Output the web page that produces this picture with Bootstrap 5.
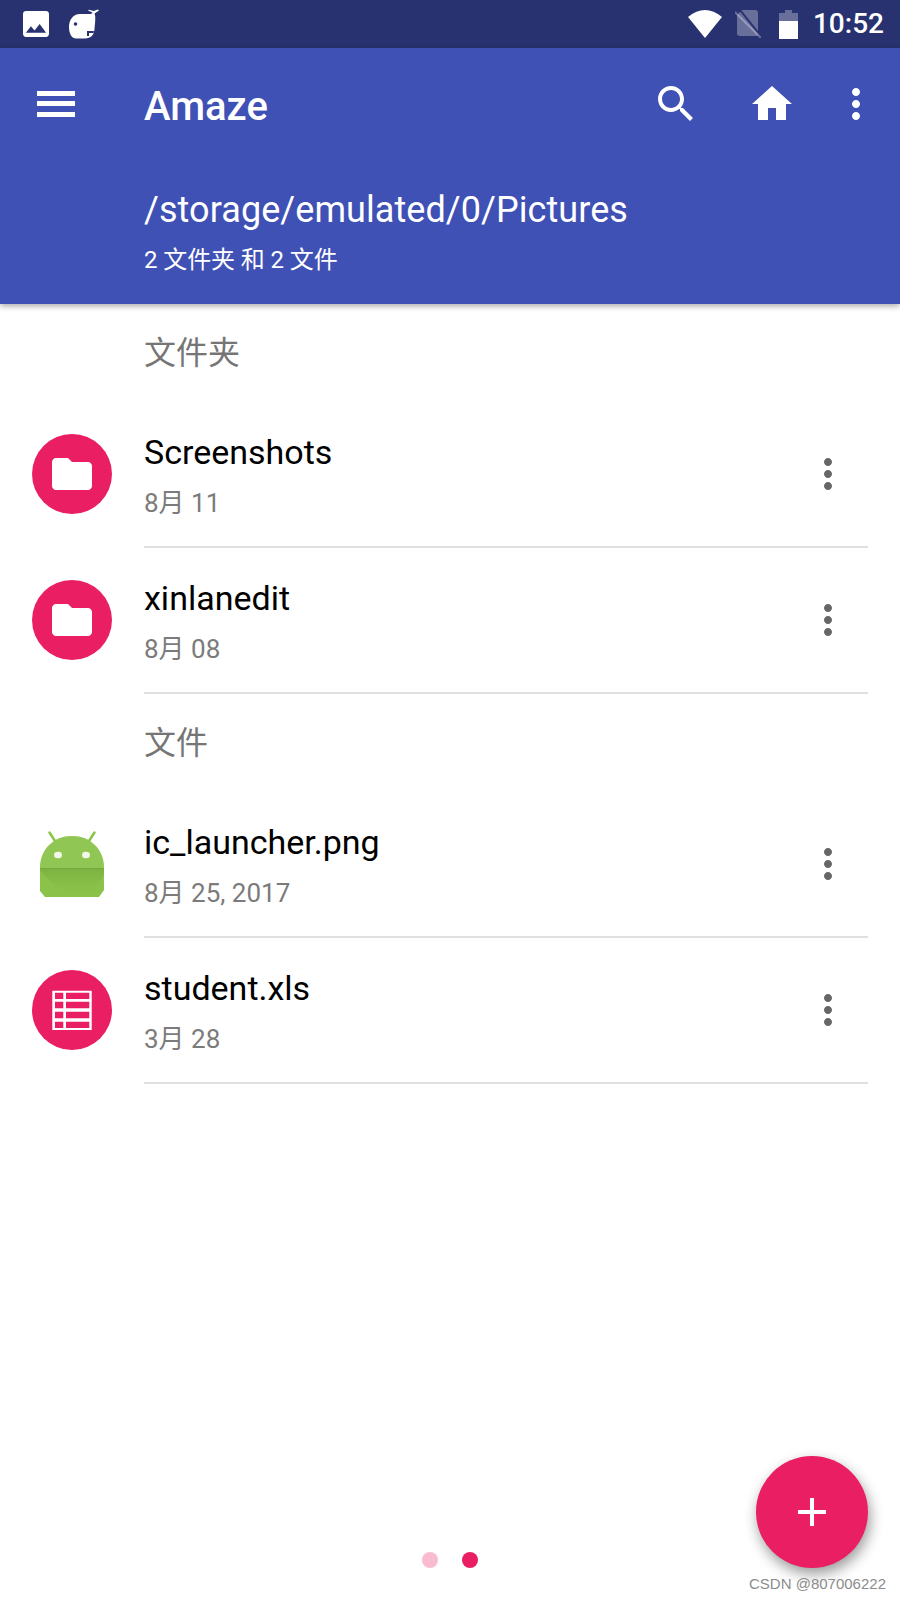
<!DOCTYPE html>
<html lang="zh">
<head>
    <meta charset="UTF-8">
    <meta name="viewport" content="width=device-width, initial-scale=1.0">
    <title>Amaze</title>
    <link href="https://cdn.jsdelivr.net/npm/bootstrap@5.3.0/dist/css/bootstrap.min.css" rel="stylesheet">
    <style>
        html, body { height: 1600px; overflow: hidden; }
        body {
            font-family: Roboto, "Noto Sans CJK SC", sans-serif;
            background: #fff;
            color: #000;
        }
        .phone { position: relative; height: 1600px; }
        .status-bar { height: 48px; background: #283270; padding: 0 16px 0 23px; color: #fff; }
        .status-clock { font-size: 28px; font-weight: 500; line-height: 48px; margin-left: 15px; }
        .app-bar { height: 256px; background: #3f51b5; color: #fff; box-shadow: 0 2px 6px rgba(0,0,0,.35); position: relative; }
        .tool-row { height: 48px; margin-top: 32px; padding: 0 20px 0 32px; }
        .app-title { font-size: 40px; font-weight: 500; line-height: 48px; margin-left: 64px; padding-top: 6px; }
        .path-block { padding-left: 144px; margin-top: 58px; }
        .path-text { font-size: 36px; line-height: 48px; letter-spacing: .07px; }
        .path-sub { font-size: 24px; line-height: 32px; margin-top: 10px; letter-spacing: -.1px; }
        .sect-head { height: 98px; padding: 25px 0 0 144px; font-size: 32px; line-height: 48px; color: #757575; }
        .file-row { height: 146px; padding-left: 32px; }
        .file-icon { width: 80px; height: 80px; flex: none; margin-bottom: 2px; }
        .pink-disc { background: #e91e63; }
        .file-body { height: 146px; margin-left: 32px; margin-right: 32px; border-bottom: 2px solid #e0e0e0; padding-right: 16px; }
        .file-name { font-size: 34px; line-height: 44px; padding-top: 28px; box-sizing: content-box; }
        .file-date { font-size: 26px; line-height: 34px; margin-top: 12px; color: #7b7b7b; }
        .pager { padding-bottom: 32px; gap: 24px; }
        .pager-dot { width: 16px; height: 16px; background: #e91e63; }
        .pager-dot.dim { background: #f8bbd0; }
        .fab-add { position: absolute; left: 756px; top: 1456px; width: 112px; height: 112px; background: #e91e63; box-shadow: 2px 6px 14px rgba(0,0,0,.4); }
        .water-mark { position: absolute; left: 749px; top: 1575px; font: 15px/18px "Liberation Sans", sans-serif; color: #8c8c8c; white-space: nowrap; }
    </style>
</head>
<body>
<div class="phone d-flex flex-column">
    <div class="status-bar d-flex align-items-center flex-none">
        <svg width="26" height="26" viewBox="3 3 18 18"><path fill="#fff" fill-rule="evenodd" d="M21 19V5c0-1.100-.9-2-2-2H5c-1.100 0-2 .9-2 2v14c0 1.100.9 2 2 2h14c1.100 0 2-.9 2-2zM8.500 13.500l2.500 3.010L14.500 12l4.500 6H5l3.500-4.500z"/></svg>
        <svg width="30" height="30" viewBox="0 0 30 30" style="margin-left:20px"><path fill="#fff" d="M0 18C0 11 4 5 11 5h9c2 0 3-.5 3.500-1.500L19 1.500l1-.8 4.500 1.300L29 .5l1 1-4.500 3C27 8 26 14 25.500 20c-.5 6-3.500 9.500-9.500 9.500H7C3 29.500 0 25 0 18z"/><circle cx="6.500" cy="15" r="1.800" fill="#283270"/><path fill="#283270" d="M18 22h7l-.5 2h-4.500v3h-2z"/></svg>
        <div class="flex-grow-1"></div>
        <svg width="34" height="28" viewBox="0 0 34 28"><path fill="#fff" d="M0 7Q17-7 34 7L17 28Z"/></svg>
        <svg width="26" height="28" viewBox="0 0 26 28" style="margin-left:13px"><path fill="#fff" opacity=".3" d="M7 0H20a3 3 0 0 1 3 3V25a1 1 0 0 1-1 1H5a3 3 0 0 1-3-3V5Z"/><path stroke="#283270" stroke-width="2" d="M5 0 25 25"/><path stroke="#fff" stroke-opacity=".3" stroke-width="2" d="M0 2 26 28"/></svg>
        <svg width="19" height="29" viewBox="0 0 19 29" style="margin-left:18px"><path fill="#fff" opacity=".3" d="M6 0H13V3H19V11H0V3H6Z"/><rect y="11" width="19" height="18" fill="#fff"/></svg>
        <span class="status-clock">10:52</span>
    </div>

    <div class="app-bar">
        <div class="tool-row d-flex align-items-center">
            <svg width="48" height="48" viewBox="0 0 48 48"><path fill="#fff" d="M5 11H43V16H5ZM5 21H43V26H5ZM5 32H43V37H5Z"/></svg>
            <div class="app-title flex-grow-1">Amaze</div>
            <svg width="48" height="48" viewBox="0 0 24 24"><path fill="#fff" d="M15.500 14h-.79l-.28-.27C15.410 12.590 16 11.110 16 9.500 16 5.910 13.090 3 9.500 3S3 5.910 3 9.500 5.910 16 9.500 16c1.610 0 3.090-.59 4.230-1.570l.27.28v.79l5 4.990L20.490 19l-4.990-5zm-6 0C7.010 14 5 11.990 5 9.500S7.010 5 9.500 5 14 7.010 14 9.500 11.990 14 9.500 14z"/></svg>
            <svg width="48" height="48" viewBox="0 0 24 24" style="margin-left:48px"><path fill="#fff" d="M10 20v-6h4v6h5v-8h3L12 3 2 12h3v8z"/></svg>
            <svg width="48" height="48" viewBox="0 0 24 24" style="margin-left:36px"><path fill="#fff" d="M12 8c1.100 0 2-.9 2-2s-.9-2-2-2-2 .9-2 2 .9 2 2 2zm0 2c-1.100 0-2 .9-2 2s.9 2 2 2 2-.9 2-2-.9-2-2-2zm0 6c-1.100 0-2 .9-2 2s.9 2 2 2 2-.9 2-2-.9-2-2-2z"/></svg>
        </div>
        <div class="path-block">
            <div class="path-text">/storage/emulated/0/Pictures</div>
            <div class="path-sub">2 文件夹 和 2 文件</div>
        </div>
    </div>

    <div class="sect-head">文件夹</div>

    <div class="file-row d-flex align-items-center">
        <div class="file-icon pink-disc rounded-circle d-flex align-items-center justify-content-center">
            <svg width="48" height="48" viewBox="0 0 24 24"><path fill="#fff" d="M10 4H4c-1.100 0-2 .9-2 2v12c0 1.100.9 2 2 2h16c1.100 0 2-.9 2-2V8c0-1.100-.9-2-2-2h-8l-2-2z"/></svg>
        </div>
        <div class="file-body flex-grow-1 d-flex justify-content-between align-items-center">
            <div class="align-self-start">
                <div class="file-name">Screenshots</div>
                <div class="file-date">8月 11</div>
            </div>
            <svg width="48" height="48" viewBox="0 0 24 24"><path fill="#666" d="M12 8c1.100 0 2-.9 2-2s-.9-2-2-2-2 .9-2 2 .9 2 2 2zm0 2c-1.100 0-2 .9-2 2s.9 2 2 2 2-.9 2-2-.9-2-2-2zm0 6c-1.100 0-2 .9-2 2s.9 2 2 2 2-.9 2-2-.9-2-2-2z"/></svg>
        </div>
    </div>

    <div class="file-row d-flex align-items-center">
        <div class="file-icon pink-disc rounded-circle d-flex align-items-center justify-content-center">
            <svg width="48" height="48" viewBox="0 0 24 24"><path fill="#fff" d="M10 4H4c-1.100 0-2 .9-2 2v12c0 1.100.9 2 2 2h16c1.100 0 2-.9 2-2V8c0-1.100-.9-2-2-2h-8l-2-2z"/></svg>
        </div>
        <div class="file-body flex-grow-1 d-flex justify-content-between align-items-center">
            <div class="align-self-start">
                <div class="file-name">xinlanedit</div>
                <div class="file-date">8月 08</div>
            </div>
            <svg width="48" height="48" viewBox="0 0 24 24"><path fill="#666" d="M12 8c1.100 0 2-.9 2-2s-.9-2-2-2-2 .9-2 2 .9 2 2 2zm0 2c-1.100 0-2 .9-2 2s.9 2 2 2 2-.9 2-2-.9-2-2-2zm0 6c-1.100 0-2 .9-2 2s.9 2 2 2 2-.9 2-2-.9-2-2-2z"/></svg>
        </div>
    </div>

    <div class="sect-head">文件</div>

    <div class="file-row d-flex align-items-center">
        <div class="file-icon">
            <svg width="80" height="80" viewBox="0 0 80 80">
                <defs>
                    <linearGradient id="droidShade" x1="0" y1="0" x2="0" y2="1">
                        <stop offset="0" stop-color="#558b2f" stop-opacity=".3"/>
                        <stop offset=".6" stop-color="#558b2f" stop-opacity=".06"/>
                        <stop offset="1" stop-color="#558b2f" stop-opacity="0"/>
                    </linearGradient>
                </defs>
                <path stroke="#8bc34a" stroke-width="2.500" stroke-linecap="round" d="M23 17 17.500 8.500M57 17 62.500 8.500"/>
                <path fill="#8bc34a" d="M8 44C8 25 22 12 40 12S72 25 72 44V66L67 73H13L8 67Z"/>
                <path fill="#9ccc65" opacity=".35" d="M8 44C8 25 22 12 40 12S72 25 72 44Z"/>
                <path fill="url(#droidShade)" d="M8 44H72V50L60 73H34L8 47Z"/>
                <path fill="#558b2f" opacity=".2" d="M8 44H72V45H8Z"/>
                <ellipse cx="26" cy="31" rx="4" ry="3.200" fill="#f1f8e9"/>
                <ellipse cx="54" cy="31" rx="4" ry="3.200" fill="#f1f8e9"/>
            </svg>
        </div>
        <div class="file-body flex-grow-1 d-flex justify-content-between align-items-center">
            <div class="align-self-start">
                <div class="file-name">ic_launcher.png</div>
                <div class="file-date">8月 25, 2017</div>
            </div>
            <svg width="48" height="48" viewBox="0 0 24 24"><path fill="#666" d="M12 8c1.100 0 2-.9 2-2s-.9-2-2-2-2 .9-2 2 .9 2 2 2zm0 2c-1.100 0-2 .9-2 2s.9 2 2 2 2-.9 2-2-.9-2-2-2zm0 6c-1.100 0-2 .9-2 2s.9 2 2 2 2-.9 2-2-.9-2-2-2z"/></svg>
        </div>
    </div>

    <div class="file-row d-flex align-items-center">
        <div class="file-icon pink-disc rounded-circle">
            <svg width="80" height="80" viewBox="0 0 80 80">
                <path fill="#fff" fill-rule="evenodd" d="M20.300 20.700H59.700V60H20.300ZM23 22.700V29H31.300V22.700ZM34 22.700V29H57.300V22.700ZM23 31.700V38.300H31.300V31.700ZM34 31.700V38.300H57.300V31.700ZM23 41.700V48.300H31.300V41.700ZM34 41.700V48.300H57.300V41.700ZM23 51.700V58H31.300V51.700ZM34 51.700V58H57.300V51.700Z"/>
            </svg>
        </div>
        <div class="file-body flex-grow-1 d-flex justify-content-between align-items-center">
            <div class="align-self-start">
                <div class="file-name">student.xls</div>
                <div class="file-date">3月 28</div>
            </div>
            <svg width="48" height="48" viewBox="0 0 24 24"><path fill="#666" d="M12 8c1.100 0 2-.9 2-2s-.9-2-2-2-2 .9-2 2 .9 2 2 2zm0 2c-1.100 0-2 .9-2 2s.9 2 2 2 2-.9 2-2-.9-2-2-2zm0 6c-1.100 0-2 .9-2 2s.9 2 2 2 2-.9 2-2-.9-2-2-2z"/></svg>
        </div>
    </div>

    <div class="pager d-flex justify-content-center mt-auto">
        <span class="pager-dot dim rounded-circle"></span>
        <span class="pager-dot rounded-circle"></span>
    </div>

    <div class="fab-add rounded-circle d-flex align-items-center justify-content-center">
        <svg width="48" height="48" viewBox="0 0 24 24"><path fill="#fff" d="M19 13h-6v6h-2v-6H5v-2h6V5h2v6h6v2z"/></svg>
    </div>
    <div class="water-mark">CSDN @807006222</div>
</div>
</body>
</html>
